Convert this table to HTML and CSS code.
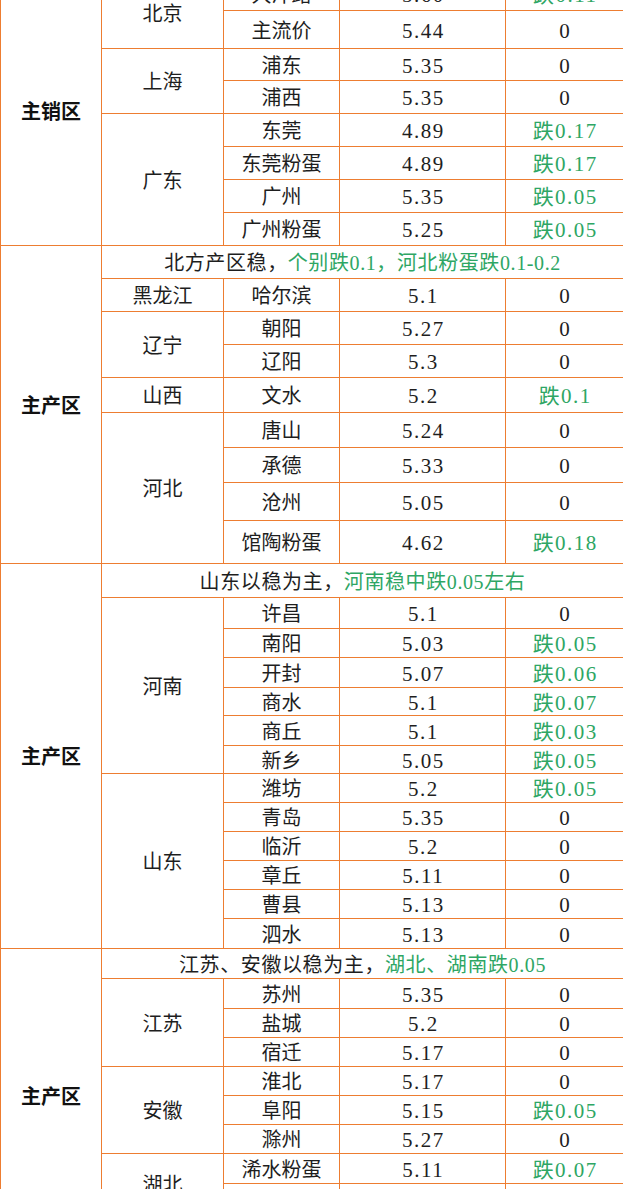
FILE: index.html
```html
<!DOCTYPE html>
<html lang="zh-CN">
<head>
<meta charset="utf-8">
<title>鸡蛋价格</title>
<link rel="stylesheet" href="styles.css">
</head>
<body>
<table class="grid">
  <colgroup>
    <col class="c-zone"><col class="c-prov"><col class="c-city"><col class="c-price"><col class="c-chg">
  </colgroup>
  <tbody>
    <tr class="r34"><td class="zone" rowspan="8">主销区</td><td rowspan="2">北京</td><td>大洋路</td><td class="num">5.60</td><td class="num g">跌0.11</td></tr>
    <tr class="r38"><td>主流价</td><td class="num">5.44</td><td class="num">0</td></tr>
    <tr class="r32"><td rowspan="2">上海</td><td>浦东</td><td class="num">5.35</td><td class="num">0</td></tr>
    <tr class="r33"><td>浦西</td><td class="num">5.35</td><td class="num">0</td></tr>
    <tr class="r33"><td rowspan="4">广东</td><td>东莞</td><td class="num">4.89</td><td class="num g">跌0.17</td></tr>
    <tr class="r33"><td>东莞粉蛋</td><td class="num">4.89</td><td class="num g">跌0.17</td></tr>
    <tr class="r33"><td>广州</td><td class="num">5.35</td><td class="num g">跌0.05</td></tr>
    <tr class="r33"><td>广州粉蛋</td><td class="num">5.25</td><td class="num g">跌0.05</td></tr>

    <tr class="r33"><td class="zone" rowspan="9">主产区</td><td class="note" colspan="4">北方产区稳，<span class="g">个别跌0.1，河北粉蛋跌0.1-0.2</span></td></tr>
    <tr class="r33"><td>黑龙江</td><td>哈尔滨</td><td class="num">5.1</td><td class="num">0</td></tr>
    <tr class="r33"><td rowspan="2">辽宁</td><td>朝阳</td><td class="num">5.27</td><td class="num">0</td></tr>
    <tr class="r33"><td>辽阳</td><td class="num">5.3</td><td class="num">0</td></tr>
    <tr class="r35"><td>山西</td><td>文水</td><td class="num">5.2</td><td class="num g">跌0.1</td></tr>
    <tr class="r35"><td rowspan="4">河北</td><td>唐山</td><td class="num">5.24</td><td class="num">0</td></tr>
    <tr class="r35"><td>承德</td><td class="num">5.33</td><td class="num">0</td></tr>
    <tr class="r38"><td>沧州</td><td class="num">5.05</td><td class="num">0</td></tr>
    <tr class="r43"><td>馆陶粉蛋</td><td class="num">4.62</td><td class="num g">跌0.18</td></tr>

    <tr class="r34"><td class="zone" rowspan="13">主产区</td><td class="note" colspan="4">山东以稳为主，<span class="g">河南稳中跌0.05左右</span></td></tr>
    <tr class="r31"><td rowspan="6">河南</td><td>许昌</td><td class="num">5.1</td><td class="num">0</td></tr>
    <tr class="r29"><td>南阳</td><td class="num">5.03</td><td class="num g">跌0.05</td></tr>
    <tr class="r30"><td>开封</td><td class="num">5.07</td><td class="num g">跌0.06</td></tr>
    <tr class="r28"><td>商水</td><td class="num">5.1</td><td class="num g">跌0.07</td></tr>
    <tr class="r30"><td>商丘</td><td class="num">5.1</td><td class="num g">跌0.03</td></tr>
    <tr class="r28"><td>新乡</td><td class="num">5.05</td><td class="num g">跌0.05</td></tr>
    <tr class="r29"><td rowspan="6">山东</td><td>潍坊</td><td class="num">5.2</td><td class="num g">跌0.05</td></tr>
    <tr class="r29"><td>青岛</td><td class="num">5.35</td><td class="num">0</td></tr>
    <tr class="r29"><td>临沂</td><td class="num">5.2</td><td class="num">0</td></tr>
    <tr class="r29"><td>章丘</td><td class="num">5.11</td><td class="num">0</td></tr>
    <tr class="r29"><td>曹县</td><td class="num">5.13</td><td class="num">0</td></tr>
    <tr class="r30"><td>泗水</td><td class="num">5.13</td><td class="num">0</td></tr>

    <tr class="r30"><td class="zone" rowspan="10">主产区</td><td class="note" colspan="4">江苏、安徽以稳为主，<span class="g">湖北、湖南跌0.05</span></td></tr>
    <tr class="r30"><td rowspan="3">江苏</td><td>苏州</td><td class="num">5.35</td><td class="num">0</td></tr>
    <tr class="r29"><td>盐城</td><td class="num">5.2</td><td class="num">0</td></tr>
    <tr class="r29"><td>宿迁</td><td class="num">5.17</td><td class="num">0</td></tr>
    <tr class="r29"><td rowspan="3">安徽</td><td>淮北</td><td class="num">5.17</td><td class="num">0</td></tr>
    <tr class="r29"><td>阜阳</td><td class="num">5.15</td><td class="num g">跌0.05</td></tr>
    <tr class="r29"><td>滁州</td><td class="num">5.27</td><td class="num">0</td></tr>
    <tr class="r30"><td rowspan="2">湖北</td><td>浠水粉蛋</td><td class="num">5.11</td><td class="num g">跌0.07</td></tr>
    <tr class="r30"><td>武汉</td><td class="num">5.06</td><td class="num g">跌0.05</td></tr>
    <tr class="r29"><td>湖南</td><td>长沙</td><td class="num">5.15</td><td class="num g">跌0.05</td></tr>
  </tbody>
</table>
</body>
</html>
```

FILE: styles.css
```css
html, body {
  margin: 0;
  padding: 0;
  background: #ffffff;
}

body {
  font-family: "Liberation Serif", "Noto Sans CJK SC", serif;
  font-size: 20px;
  line-height: 20px;
  color: #1e1e1e;
  overflow: hidden;
}

.grid {
  margin-top: -24px;
  width: 623px;
  border-collapse: collapse;
  table-layout: fixed;
}

.c-zone { width: 101px; }
.c-prov { width: 122px; }
.c-city { width: 116px; }
.c-price { width: 166px; }
.c-chg { width: 118px; }

.grid td {
  border: 1px solid #ED7D31;
  padding: 2px 0 0;
  text-align: center;
  vertical-align: middle;
  white-space: nowrap;
  font-weight: 400;
}

.grid td.zone {
  padding: 0;
  font-weight: 700;
  font-family: "Noto Sans CJK SC", sans-serif;
  color: #111;
}

.grid td.num {
  font-family: "Liberation Serif", "Noto Sans CJK SC", serif;
  font-size: 21px;
  letter-spacing: 1.5px;
  text-indent: 1.5px;
}

.grid td.note {
  letter-spacing: 0.6px;
}

.g {
  color: #2ea664;
}

.r28 { height: 28px; }
.r29 { height: 29px; }
.r30 { height: 30px; }
.r31 { height: 31px; }
.r32 { height: 32px; }
.r33 { height: 33px; }
.r34 { height: 34px; }
.r35 { height: 35px; }
.r38 { height: 38px; }
.r43 { height: 43px; }
```
